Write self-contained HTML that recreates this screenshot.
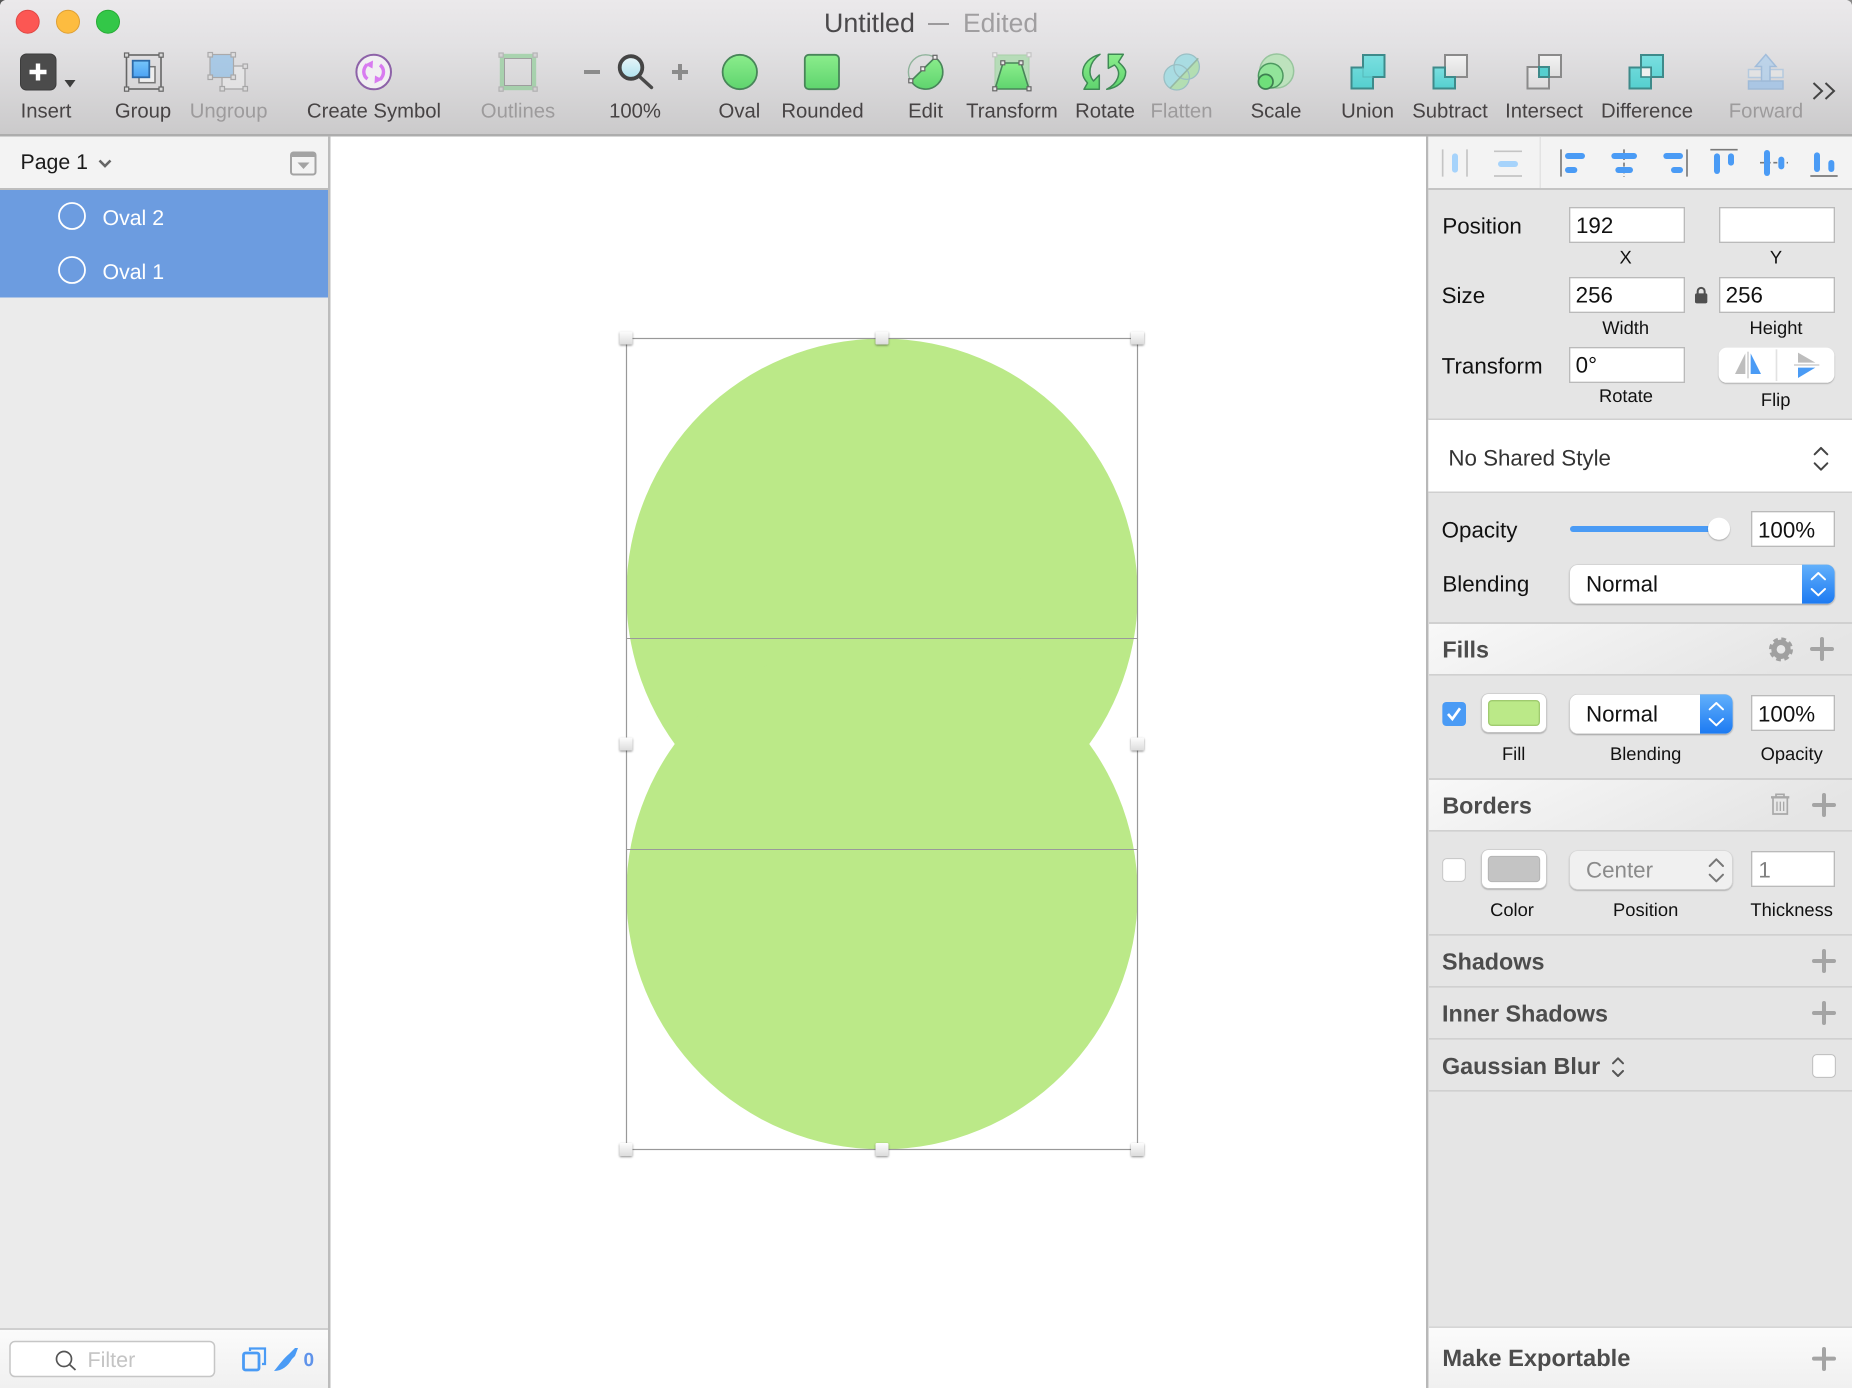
<!DOCTYPE html>
<html><head><meta charset="utf-8"><title>Untitled</title>
<style>
html,body{margin:0;padding:0;background:#fff;width:1852px;height:1388px;overflow:hidden}
svg{display:block;position:absolute;left:0;top:0}
text{font-family:"Liberation Sans",Arial,sans-serif;text-rendering:geometricPrecision}
.tb text{font-size:20.300px;fill:#474344;text-anchor:middle}
.tb text.d{fill:#9d9b9c}
.z .lb{font-size:67px;fill:#111}
.z .sm{font-size:55px;fill:#111;text-anchor:middle}
.z .h{font-size:70px;font-weight:bold;fill:#4c4c4c}
.z .in{font-size:67px;fill:#111}
.z .plus{stroke:#a4a4a4;stroke-width:12;stroke-linecap:round;fill:none}
.z .fld{fill:#fff;stroke:#bababa;stroke-width:4}
.z .chev{fill:none;stroke-width:6;stroke-linecap:round;stroke-linejoin:round}
</style></head><body>
<svg width="1852" height="1388" viewBox="0 0 1852 1388" xmlns="http://www.w3.org/2000/svg">
<defs>
<linearGradient id="tbg" x1="0" y1="0" x2="0" y2="1"><stop offset="0" stop-color="#ebe9eb"/><stop offset=".35" stop-color="#e2e1e3"/><stop offset="1" stop-color="#cbcacb"/></linearGradient>
<linearGradient id="gr" x1="0" y1="0" x2="0" y2="1"><stop offset="0" stop-color="#8bed8c"/><stop offset="1" stop-color="#5fd46e"/></linearGradient>
<linearGradient id="te" x1="0" y1="0" x2="0" y2="1"><stop offset="0" stop-color="#7adfe0"/><stop offset="1" stop-color="#55cfcf"/></linearGradient>
<linearGradient id="wh" x1="0" y1="0" x2="0" y2="1"><stop offset="0" stop-color="#f4f4f4"/><stop offset="1" stop-color="#dedede"/></linearGradient>
<linearGradient id="bl" x1="0" y1="0" x2="0" y2="1"><stop offset="0" stop-color="#62b0fb"/><stop offset="1" stop-color="#1c7af2"/></linearGradient>
<linearGradient id="bsq" x1="0" y1="0" x2="0" y2="1"><stop offset="0" stop-color="#75c5fb"/><stop offset="1" stop-color="#4ba2f3"/></linearGradient>
<linearGradient id="hd" x1="0" y1="0" x2="1" y2="0.25"><stop offset="0" stop-color="#f8f8f8"/><stop offset="1" stop-color="#e5e5e5"/></linearGradient>
<linearGradient id="hd2" x1="0" y1="0" x2="0" y2="1"><stop offset="0" stop-color="#fbfbfb"/><stop offset="1" stop-color="#f0f0f0"/></linearGradient>
<linearGradient id="mag" x1="0" y1="0" x2="0" y2="1"><stop offset="0" stop-color="#eaf6f9"/><stop offset="1" stop-color="#aee2ee"/></linearGradient>
<linearGradient id="hn" x1="0" y1="0" x2="0" y2="1"><stop offset="0" stop-color="#fdfdfd"/><stop offset="1" stop-color="#dcdcdc"/></linearGradient>
<filter id="sh" x="-30%" y="-30%" width="160%" height="170%"><feDropShadow dx="0" dy="1" stdDeviation="1" flood-color="#000" flood-opacity=".45"/></filter>
<filter id="sh3" x="-20%" y="-20%" width="140%" height="150%"><feDropShadow dx="0" dy="3" stdDeviation="2" flood-color="#000" flood-opacity=".3"/></filter>
<clipPath id="fa"><path d="M1170 88.300L1198.300 58.300V50H1160V88.300Z"/></clipPath>
<clipPath id="fb"><path d="M1170 88.300L1198.300 58.300H1205V95H1170Z"/></clipPath>
</defs>

<!-- toolbar -->
<rect x="0" y="0" width="1852" height="134" fill="url(#tbg)"/>
<rect x="0" y="134" width="1852" height="2.500" fill="#adadad"/>
<path d="M0 0H5Q1 1 0 5Z" fill="#555"/><path d="M1852 0H1847Q1851 1 1852 5Z" fill="#888"/>
<circle cx="27.700" cy="21.700" r="11.500" fill="#fc5753" stroke="#df4744" stroke-width="1"/>
<circle cx="68" cy="21.700" r="11.500" fill="#fdbc40" stroke="#de9f34" stroke-width="1"/>
<circle cx="108" cy="21.700" r="11.500" fill="#33c748" stroke="#27aa35" stroke-width="1"/>

<text x="824" y="32" font-size="26.800" fill="#4b494b">Untitled</text>
<rect x="928" y="23" width="21" height="2" fill="#9c9a9c"/>
<text x="963" y="32" font-size="26.500" fill="#a09ea0">Edited</text>

<g class="tb">
<text x="46" y="117.700">Insert</text>
<text x="143" y="117.700">Group</text>
<text class="d" x="228.600" y="117.700">Ungroup</text>
<text x="374" y="117.700">Create Symbol</text>
<text class="d" x="518" y="117.700">Outlines</text>
<text x="635" y="117.700">100%</text>
<text x="739.400" y="117.700">Oval</text>
<text x="822.500" y="117.700">Rounded</text>
<text x="925.600" y="117.700">Edit</text>
<text x="1012" y="117.700">Transform</text>
<text x="1105" y="117.700">Rotate</text>
<text class="d" x="1181.500" y="117.700">Flatten</text>
<text x="1276" y="117.700">Scale</text>
<text x="1367.600" y="117.700">Union</text>
<text x="1450" y="117.700">Subtract</text>
<text x="1544" y="117.700">Intersect</text>
<text x="1647" y="117.700">Difference</text>
<text class="d" x="1766" y="117.700">Forward</text>
</g>

<!-- Insert -->
<rect x="20.500" y="54" width="35.500" height="36" rx="6" fill="#4b4b4b" stroke="#3c3c3c"/>
<path d="M38 63.500V80.500M29.500 72H46.500" stroke="#fff" stroke-width="4.400" fill="none"/>
<path d="M64.500 80H75.500L70 87.500Z" fill="#3d3d3d"/>

<!-- Group -->
<g>
<rect x="126.500" y="55" width="34.500" height="34" fill="none" stroke="#666" stroke-width="1.600"/>
<rect x="139" y="66.700" width="16" height="16" fill="#eee" stroke="#777" stroke-width="1.500"/>
<rect x="132.700" y="60.700" width="16.600" height="16.600" fill="url(#bsq)" stroke="#2d6aa8" stroke-width="1.800"/>
<g fill="#d8d8d8" stroke="#666" stroke-width="1.200"><rect x="124.500" y="53" width="4.200" height="4.200"/><rect x="159" y="53" width="4.200" height="4.200"/><rect x="124.500" y="87" width="4.200" height="4.200"/><rect x="159" y="87" width="4.200" height="4.200"/></g>
</g>
<!-- Ungroup -->
<g opacity=".5">
<rect x="222" y="66" width="23" height="23" fill="#eee" stroke="#888" stroke-width="1.500"/>
<rect x="210" y="54.500" width="23.500" height="23" fill="#74b6ec" stroke="#777" stroke-width="1.200"/>
<g fill="#ddd" stroke="#777" stroke-width="1.200"><rect x="208" y="52.500" width="4.500" height="4.500"/><rect x="231" y="52.500" width="4.500" height="4.500"/><rect x="208" y="75" width="4.500" height="4.500"/><rect x="231" y="75" width="4.500" height="4.500"/><rect x="243" y="64" width="4.500" height="4.500"/><rect x="243" y="86.500" width="4.500" height="4.500"/><rect x="220" y="86.500" width="4.500" height="4.500"/></g>
</g>
<!-- Create Symbol -->
<circle cx="373.700" cy="72" r="17.300" fill="#f1eff2" stroke="#8d62a8" stroke-width="2"/>
<path d="M367 64.500C362.500 69 362.800 75.500 367.500 79M380 79.500C384.800 75 384.500 68.500 380 65" fill="none" stroke="#d87bf0" stroke-width="3.400"/>
<path d="M373 60.500L365 64.500L372.500 68.500ZM374.500 83.500L382.500 79.500L375 75.500Z" fill="#d87bf0"/>
<!-- Outlines -->
<g opacity=".6">
<rect x="502" y="56" width="32" height="32" fill="none" stroke="#86cc8f" stroke-width="4.400"/>
<rect x="504.500" y="58.500" width="27" height="27" fill="none" stroke="#777" stroke-width="1"/>
<g fill="#ccc" stroke="#999" stroke-width="1.200"><rect x="499" y="53" width="4.200" height="4.200"/><rect x="533" y="53" width="4.200" height="4.200"/><rect x="499" y="87" width="4.200" height="4.200"/><rect x="533" y="87" width="4.200" height="4.200"/></g>
</g>
<!-- zoom controls -->
<rect x="584" y="70" width="16" height="4" fill="#8b8b8b"/>
<path d="M640 77L651.500 87.500" stroke="#4a4a4a" stroke-width="3.400" stroke-linecap="round"/>
<circle cx="631" cy="67.500" r="11.300" fill="url(#mag)" stroke="#444" stroke-width="3.800"/>
<path d="M680 64V80M672 72H688" stroke="#8b8b8b" stroke-width="4"/>
<!-- Oval -->
<ellipse cx="739.800" cy="72" rx="17.200" ry="17.200" fill="url(#gr)" stroke="#488559" stroke-width="1.800"/>
<!-- Rounded -->
<rect x="804.800" y="54.800" width="34.200" height="34.400" rx="4" fill="url(#gr)" stroke="#488559" stroke-width="1.800"/>
<!-- Edit -->
<circle cx="925.600" cy="72" r="17.200" fill="none" stroke="#8fb39b" stroke-width="1.400"/>
<path d="M911 81L935 57.500A17.200 17.200 0 1 1 911 81Z" fill="url(#gr)" stroke="#488559" stroke-width="1.600"/>
<g fill="#eee" stroke="#666" stroke-width="1.200"><rect x="908.800" y="78.800" width="4" height="4"/><rect x="920.800" y="66.800" width="4" height="4"/><rect x="933" y="55.300" width="4" height="4"/></g>
<!-- Transform -->
<rect x="995" y="55" width="34" height="34" fill="#b6dcb8" stroke="#a8cfa9" stroke-width="1"/>
<path d="M1003 63H1021L1029 89H995Z" fill="url(#gr)" stroke="#488559" stroke-width="1.600"/>
<g fill="#eee" stroke="#c4c4c4" stroke-width="1.200"><rect x="992.800" y="52.800" width="4" height="4"/><rect x="1027" y="52.800" width="4" height="4"/></g>
<g fill="#e4e4e4" stroke="#666" stroke-width="1.200"><rect x="1000.800" y="60.800" width="4" height="4"/><rect x="1019" y="60.800" width="4" height="4"/><rect x="992.800" y="86.800" width="4" height="4"/><rect x="1027" y="86.800" width="4" height="4"/></g>
<!-- Rotate -->
<path d="M1100 54.300C1090 57 1082.700 64 1082.700 73C1082.700 76 1084 79 1087.500 83L1084 89.300H1099.300V75L1093.500 81C1088 75 1088 63 1100 54.300Z" fill="url(#gr)" stroke="#3f8a55" stroke-width="1.500" stroke-linejoin="round"/>
<path d="M1108.300 54.300H1123.300L1118.500 62C1123 66 1125.700 70 1125.700 72C1125.700 81 1117 88 1106.700 89.300C1117 84 1123 73 1114.500 65L1108.300 68.300Z" fill="url(#gr)" stroke="#3f8a55" stroke-width="1.500" stroke-linejoin="round"/>
<!-- Flatten -->
<g>
<g clip-path="url(#fa)" fill="#a9dce2"><circle cx="1186.700" cy="66.700" r="12.700"/><circle cx="1176.700" cy="77.300" r="12.700"/></g>
<g clip-path="url(#fb)" fill="#b3deb2"><circle cx="1186.700" cy="66.700" r="12.700"/><circle cx="1176.700" cy="77.300" r="12.700"/><rect x="1176" y="66" width="11" height="12"/></g>
<circle cx="1186.700" cy="66.700" r="12.700" fill="none" stroke="#9abfc4" stroke-width="1.300"/>
<circle cx="1176.700" cy="77.300" r="12.700" fill="none" stroke="#9abfc4" stroke-width="1.300"/>
<path d="M1170 88.300L1198.300 58.300" stroke="#96b8a4" stroke-width="1.500"/>
</g>
<!-- Scale -->
<circle cx="1276.700" cy="71" r="17" fill="#bde2bd" stroke="#97c59d" stroke-width="1.500"/>
<circle cx="1270.700" cy="75.700" r="12.300" fill="#92e49a" stroke="#4d9860" stroke-width="1.500"/>
<circle cx="1265.700" cy="81.700" r="7.300" fill="#6fe07a" stroke="#3d7f50" stroke-width="1.700"/>
<!-- Union -->
<path d="M1351.500 67.500H1363V55H1384.500V77H1373V88.500H1351.500Z" fill="url(#te)" stroke="#3e8a8a" stroke-width="2"/>
<path d="M1363 67.500V77H1373" fill="none" stroke="#56b8b8" stroke-width="1"/>
<!-- Subtract -->
<rect x="1445" y="55" width="22" height="22" fill="url(#wh)" stroke="#8a8a8a" stroke-width="2"/>
<path d="M1433.500 67.500H1445V77H1455V88.500H1433.500Z" fill="url(#te)" stroke="#3e8a8a" stroke-width="2"/>
<!-- Intersect -->
<rect x="1539" y="55" width="22" height="22" fill="url(#wh)" stroke="#8a8a8a" stroke-width="2"/>
<rect x="1527.500" y="67" width="21.500" height="21.500" fill="url(#wh)" stroke="#8a8a8a" stroke-width="2" fill-opacity=".6"/>
<rect x="1539" y="67" width="10" height="10" fill="#55cfcf" stroke="#3e8a8a" stroke-width="2"/>
<!-- Difference -->
<path d="M1629.500 67.500H1641V55H1663V77H1651V88.500H1629.500Z" fill="url(#te)" stroke="#3e8a8a" stroke-width="2"/>
<path d="M1629.500 67.500H1651V77" fill="none" stroke="#3e8a8a" stroke-width="2"/>
<rect x="1641" y="67.500" width="10" height="9.500" fill="#f0f0f0" stroke="#3e8a8a" stroke-width="1.600"/>
<!-- Forward -->
<g opacity=".6">
<rect x="1748.500" y="69.500" width="34.500" height="8" fill="#e8e8e8" stroke="#9dc0e0" stroke-width="1.500"/>
<rect x="1748.500" y="81" width="34.500" height="8" fill="#8dbcec" stroke="#7aa8d8" stroke-width="1.500"/>
<path d="M1765.800 54.500L1776 66.500H1770V81H1761.500V66.500H1755.500Z" fill="#a6cdf0" stroke="#7aa8d8" stroke-width="1.500"/>
</g>
<path d="M1813.500 83L1822 91L1813.500 99M1825.500 83L1834 91L1825.500 99" fill="none" stroke="#444" stroke-width="2"/>

<!-- left sidebar -->
<rect x="0" y="137" width="328" height="1251" fill="#ebebeb"/>
<rect x="328" y="136" width="2.500" height="1252" fill="#bcbcbc"/>
<rect x="0" y="136.500" width="328" height="52" fill="#f3f3f3"/>
<rect x="0" y="188" width="328" height="2" fill="#bdbdbd"/>
<rect x="0" y="190" width="328" height="107.500" fill="#6c9ce0"/>
<text x="20.500" y="169" font-size="21.300" fill="#1a1a1a">Page 1</text>
<path d="M99.500 160.500L105 166L110.500 160.500" fill="none" stroke="#666" stroke-width="2.600"/>
<rect x="291" y="152.500" width="24.500" height="22" rx="2.500" fill="none" stroke="#a3a3a3" stroke-width="2"/>
<rect x="291" y="152.500" width="24.500" height="4.500" fill="#a3a3a3"/>
<path d="M297.500 162.500H309.500L303.500 169Z" fill="#a3a3a3"/>
<circle cx="72" cy="216" r="13" fill="none" stroke="#fff" stroke-width="1.800"/>
<circle cx="72" cy="270" r="13" fill="none" stroke="#fff" stroke-width="1.800"/>
<text x="102.500" y="225" font-size="21.300" fill="#fff">Oval 2</text>
<text x="102.500" y="279" font-size="21.300" fill="#fff">Oval 1</text>
<!-- sidebar footer -->
<rect x="0" y="1330" width="328" height="58" fill="url(#hd2)"/>
<rect x="0" y="1328" width="328" height="2" fill="#cfcfcf"/>
<rect x="10" y="1341.500" width="204.500" height="35" rx="5" fill="#fff" stroke="#c6c6c6" stroke-width="1.500"/>
<circle cx="64" cy="1359" r="7.500" fill="none" stroke="#555" stroke-width="1.700"/>
<path d="M69.500 1364.500L75.500 1370" stroke="#555" stroke-width="1.800"/>
<text x="87.500" y="1367" font-size="21.500" fill="#c4c4c4">Filter</text>
<path d="M250 1351V1348.500H265V1364H262" fill="none" stroke="#4a9bf5" stroke-width="2.200"/>
<rect x="243.500" y="1353" width="15.500" height="17" rx="2" fill="none" stroke="#4a9bf5" stroke-width="2.800"/>
<path d="M274 1371C279 1365 284 1358 289 1354L295 1348L298 1348L295 1356L292 1359C288 1366 282 1371 274 1371Z" fill="#4a9bf5"/>
<text x="303.500" y="1366" font-size="19" font-weight="bold" fill="#5f93ea">0</text>

<!-- canvas artwork -->
<circle cx="882" cy="594.300" r="255.700" fill="#bbe988"/>
<circle cx="882" cy="893.700" r="255.700" fill="#bbe988"/>
<rect x="626.500" y="338.500" width="511" height="811" fill="none" stroke="#999" stroke-width="1.200"/>
<path d="M626.500 638.500H1137.500M626.500 849.500H1137.500" stroke="#9a9a9a" stroke-width="1"/>
<g fill="url(#hn)" filter="url(#sh)">
<rect x="619.500" y="331.500" width="13" height="13" rx="1.500"/><rect x="875.500" y="331.500" width="13" height="13" rx="1.500"/><rect x="1131" y="331.500" width="13" height="13" rx="1.500"/>
<rect x="619.500" y="737.500" width="13" height="13" rx="1.500"/><rect x="1131" y="737.500" width="13" height="13" rx="1.500"/>
<rect x="619.500" y="1143" width="13" height="13" rx="1.500"/><rect x="875.500" y="1143" width="13" height="13" rx="1.500"/><rect x="1131" y="1143" width="13" height="13" rx="1.500"/>
</g>

<!-- inspector -->
<rect x="1428" y="136.500" width="424" height="1252" fill="#e5e5e5"/>
<rect x="1426" y="136" width="2.300" height="1252" fill="#b8b8b8"/>
<rect x="1428.300" y="136.500" width="424" height="52" fill="#f3f3f3"/>
<rect x="1428.300" y="188" width="424" height="2" fill="#c4c4c4"/>
<rect x="1539.500" y="137" width="1.500" height="51" fill="#e3e3e3"/>
<rect x="1428.300" y="419.500" width="424" height="72" fill="#fff"/>
<rect x="1428.300" y="418.500" width="424" height="1.500" fill="#cfcfcf"/>
<rect x="1428.300" y="491.500" width="424" height="1.500" fill="#cfcfcf"/>

<!-- zoom-4 coords -->
<g class="z" transform="translate(1420,130) scale(.33333)">
<path d="M68 58V140M141 58V140M222 64H306M222 138H306" stroke="#c4c4c4" stroke-width="5"/>
<rect x="96" y="70" width="18" height="58" rx="9" fill="#a6d3fb"/>
<rect x="234" y="93" width="60" height="18" rx="9" fill="#a6d3fb"/>
<g stroke="#7a7a7a" stroke-width="5">
<path d="M423 58V140M801 58V140M871 59H953M1171 138H1253"/>
<path d="M612 58V140M1020 98H1104" stroke-dasharray="12 8"/>
</g>
<g fill="#4a9bf5">
<rect x="435" y="69" width="60" height="18" rx="9"/><rect x="435" y="111" width="37" height="18" rx="9"/>
<rect x="574" y="69" width="77" height="18" rx="9"/><rect x="586" y="111" width="53" height="18" rx="9"/>
<rect x="730" y="69" width="59" height="18" rx="9"/><rect x="753" y="111" width="36" height="18" rx="9"/>
<rect x="882" y="70" width="18" height="62" rx="9"/><rect x="924" y="70" width="18" height="37" rx="9"/>
<rect x="1032" y="60" width="18" height="78" rx="9"/><rect x="1075" y="80" width="18" height="38" rx="9"/>
<rect x="1182" y="67" width="18" height="59" rx="9"/><rect x="1225" y="90" width="18" height="36" rx="9"/>
</g>

<text class="lb" x="67" y="310">Position</text>
<rect class="fld" x="449" y="233" width="344" height="104"/>
<rect class="fld" x="899" y="233" width="344" height="104"/>
<text class="in" x="468" y="309">192</text>
<text class="sm" x="617" y="401">X</text>
<text class="sm" x="1068" y="401">Y</text>

<text class="lb" x="65" y="519">Size</text>
<rect class="fld" x="449" y="443" width="344" height="104"/>
<rect class="fld" x="899" y="443" width="344" height="104"/>
<text class="in" x="467" y="518">256</text>
<text class="in" x="917" y="518">256</text>
<rect x="825" y="490" width="37" height="30" rx="5" fill="#4f4f4f"/>
<path d="M833 492V484A10.500 10.500 0 0 1 854 484V492" fill="none" stroke="#4f4f4f" stroke-width="6"/>
<text class="sm" x="617" y="612">Width</text>
<text class="sm" x="1068" y="612">Height</text>

<text class="lb" x="65" y="730">Transform</text>
<rect class="fld" x="449" y="653" width="344" height="104"/>
<text class="in" x="467" y="728">0°</text>
<text class="sm" x="618" y="816">Rotate</text>
<rect x="896" y="653" width="347" height="105" rx="24" fill="#fff" filter="url(#sh3)"/>
<rect x="1067" y="658" width="5" height="95" fill="#e2e2e2"/>
<path d="M945 732L976 670V732Z" fill="#bdbdbd"/>
<rect x="982" y="665" width="4" height="80" fill="#c8c8c8"/>
<path d="M992 670L1023 732H992Z" fill="#4a9bf5"/>
<path d="M1134 668V698H1186Z" fill="#bdbdbd"/>
<rect x="1122" y="703" width="76" height="4" fill="#c8c8c8"/>
<path d="M1134 713H1186L1134 744Z" fill="#4a9bf5"/>
<text class="sm" x="1067" y="828">Flip</text>

<text x="85" y="1007" style="font-size:67px;fill:#333">No Shared Style</text>
<path class="chev" d="M1184 973L1203 954L1222 973M1184 1000L1203 1019L1222 1000" stroke="#444"/>
</g>

<!-- zoom-5 coords -->
<g class="z" transform="translate(1420,490) scale(.33333)">
<text class="lb" x="65" y="143">Opacity</text>
<rect x="450" y="108" width="440" height="18" rx="9" fill="#4a9bf5"/>
<circle cx="897" cy="116" r="33" fill="#fff" filter="url(#sh3)"/>
<rect class="fld" x="995" y="65" width="248" height="104"/>
<text class="in" x="1014" y="143">100%</text>

<text class="lb" x="67" y="305">Blending</text>
<rect x="449" y="224" width="795" height="117" rx="24" fill="#fff" stroke="#ccc" stroke-width="2" filter="url(#sh3)"/>
<path d="M1146 224H1220A24 24 0 0 1 1244 248V317A24 24 0 0 1 1220 341H1146Z" fill="url(#bl)"/>
<path class="chev" d="M1175 268L1195 249L1215 268M1175 297L1195 316L1215 297" stroke="#fff"/>
<text class="in" x="498" y="305">Normal</text>

<rect x="27" y="396" width="1270" height="6" fill="#d0d0d0"/>
<rect x="27" y="402" width="1270" height="150" fill="url(#hd)"/>
<rect x="27" y="552" width="1270" height="5" fill="#d0d0d0"/>
<text class="h" x="67" y="503">Fills</text>
<circle cx="1083" cy="478" r="21" fill="none" stroke="#a0a0a0" stroke-width="16"/>
<circle cx="1083" cy="478" r="31" fill="none" stroke="#a0a0a0" stroke-width="10" stroke-dasharray="14 10.350"/>
<path class="plus" d="M1206 447V507M1176 477H1236"/>

<rect x="67" y="636" width="71" height="72" rx="12" fill="#4a9bf5"/>
<path d="M84 672L97 687L120 655" fill="none" stroke="#fff" stroke-width="8"/>
<rect x="185" y="611" width="194" height="116" rx="20" fill="#fff" stroke="#c4c4c4" stroke-width="2" filter="url(#sh3)"/>
<rect x="206" y="632" width="152" height="74" rx="10" fill="#bbe988" stroke="#a0cb6f" stroke-width="4"/>
<rect x="449" y="613" width="489" height="118" rx="24" fill="#fff" stroke="#ccc" stroke-width="2" filter="url(#sh3)"/>
<path d="M840 613H914A24 24 0 0 1 938 637V707A24 24 0 0 1 914 731H840Z" fill="url(#bl)"/>
<path class="chev" d="M869 658L889 639L909 658M869 687L889 706L909 687" stroke="#fff"/>
<text class="in" x="498" y="694">Normal</text>
<rect class="fld" x="995" y="617" width="248" height="104"/>
<text class="in" x="1014" y="694">100%</text>
<text class="sm" x="281" y="810">Fill</text>
<text class="sm" x="677" y="810">Blending</text>
<text class="sm" x="1115" y="810">Opacity</text>

<rect x="27" y="864" width="1270" height="6" fill="#d0d0d0"/>
<rect x="27" y="870" width="1270" height="150" fill="url(#hd)"/>
<rect x="27" y="1020" width="1270" height="5" fill="#d0d0d0"/>
<text class="h" x="67" y="970">Borders</text>
<g fill="none" stroke="#a8a8a8" stroke-width="5">
<path d="M1053 922H1108" stroke-width="7"/><path d="M1068 920V913H1092V920"/>
<path d="M1059 925V972H1102V925"/>
<path d="M1071 935V963M1081 935V963M1091 935V963" stroke-width="4"/>
</g>
<path class="plus" d="M1212 915V975M1182 945H1242"/>
</g>

<!-- zoom-6 coords -->
<g class="z" transform="translate(1420,780) scale(.33333)">
<rect x="68" y="236" width="68" height="68" rx="12" fill="#fff" stroke="#c6c6c6" stroke-width="3"/>
<rect x="185" y="209" width="194" height="116" rx="20" fill="#fff" stroke="#c4c4c4" stroke-width="2" filter="url(#sh3)"/>
<rect x="205" y="229" width="154" height="76" rx="10" fill="#c4c4c4" stroke="#b4b4b4" stroke-width="3"/>
<rect x="449" y="212" width="488" height="116" rx="24" fill="#f0f0f0" stroke="#d4d4d4" stroke-width="2" filter="url(#sh3)"/>
<text class="in" x="498" y="293" style="fill:#8a8a8a">Center</text>
<path class="chev" d="M869 258L889 238L909 258M869 284L889 304L909 284" stroke="#777"/>
<rect class="fld" x="995" y="215" width="248" height="104"/>
<text class="in" x="1015" y="293" style="fill:#808080">1</text>
<text class="sm" x="276" y="408">Color</text>
<text class="sm" x="677" y="408">Position</text>
<text class="sm" x="1115" y="408">Thickness</text>
<rect x="27" y="462" width="1270" height="5" fill="#d0d0d0"/>
<text class="h" x="66" y="569">Shadows</text>
<path class="plus" d="M1212 513V573M1182 543H1242"/>
<rect x="27" y="618" width="1270" height="5" fill="#d0d0d0"/>
<text class="h" x="66" y="725">Inner Shadows</text>
<path class="plus" d="M1212 669V729M1182 699H1242"/>
<rect x="27" y="774" width="1270" height="5" fill="#d0d0d0"/>
<text class="h" x="66" y="882">Gaussian Blur</text>
<path class="chev" d="M579 850L594 835L609 850M579 873L594 888L609 873" stroke="#555"/>
<rect x="1178" y="824" width="68" height="68" rx="12" fill="#fff" stroke="#bdbdbd" stroke-width="3"/>
<rect x="27" y="930" width="1270" height="5" fill="#d0d0d0"/>
</g>

<!-- zoom-8 coords -->
<g class="z" transform="translate(1420,1288) scale(.33333)">
<rect x="27" y="120" width="1270" height="180" fill="url(#hd2)"/>
<rect x="27" y="115" width="1270" height="5" fill="#d6d6d6"/>
<text class="h" x="67" y="234" style="font-size:71px">Make Exportable</text>
<path class="plus" d="M1212 183V243M1182 212H1242"/>
</g>
</svg>
</body></html>
